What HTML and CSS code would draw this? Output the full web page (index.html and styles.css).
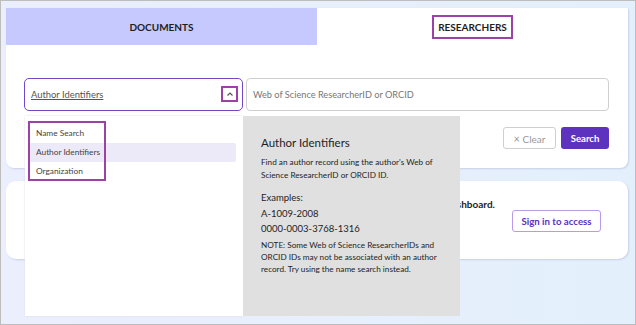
FILE: index.html
```html
<!DOCTYPE html>
<html lang="en">
<head>
    <meta charset="UTF-8">
    <meta name="viewport" content="width=device-width, initial-scale=1.0">
    <title>Researcher Search</title>
    <link rel="stylesheet" href="styles.css">
</head>
<body>
<div class="page">

    <!-- Search Card -->
    <div class="card">
        <div class="tabs">
            <div class="tab tab-docs">DOCUMENTS</div>
            <div class="tab tab-active"><span class="mark">RESEARCHERS</span></div>
        </div>
        <div class="search-body">
            <div class="search-row">
                <div class="select">
                    <span class="select-value">Author Identifiers</span>
                    <span class="chevron">
                        <svg width="8" height="6" viewBox="0 0 8 6"><path d="M1.5 4.5 L4 2 L6.5 4.5" fill="none" stroke="#555" stroke-width="1.2"/></svg>
                    </span>
                </div>
                <div class="input">Web of Science ResearcherID or ORCID</div>
            </div>
            <div class="actions">
                <button class="btn-clear"><span class="x">&times;</span> Clear</button>
                <button class="btn-search">Search</button>
            </div>
        </div>
    </div>

    <!-- Dashboard Card -->
    <div class="card-2">
        <p class="card-2-text">Sign in to view your dashboard.</p>
        <button class="btn-sign">Sign in to access</button>
    </div>

    <!-- Open dropdown -->
    <div class="dropdown">
        <div class="options">
            <div class="option-box">
                <div class="option">Name Search</div>
                <div class="option selected">Author Identifiers</div>
                <div class="option">Organization</div>
            </div>
        </div>
        <div class="info">
            <h3>Author Identifiers</h3>
            <p>Find an author record using the author's Web of Science ResearcherID or ORCID ID.</p>
            <p class="examples">Examples:<br>A-1009-2008<br>0000-0003-3768-1316</p>
            <p class="note">NOTE: Some Web of Science ResearcherIDs and ORCID IDs may not be associated with an author record. Try using the name search instead.</p>
        </div>
    </div>

</div>
</body>
</html>
```

FILE: styles.css
```css
body {
    margin: 0;
    font-family: "Source Sans Pro", Lato, sans-serif;
    color: #1e1e1e;
}
.page {
    position: relative;
    width: 636px;
    height: 325px;
    box-sizing: border-box;
    border: 1px solid #bdbdbd;
    padding: 7px 0 0 5px;
    background: linear-gradient(90deg, #ebeefd, #e3f0fc);
    overflow: hidden;
}
.card {
    width: 622px;
    background: white;
    border-radius: 0 0 8px 8px;
    box-shadow: 1px 1px 2px #c8d0e6;
}
.tabs {
    display: flex;
    height: 37px;
}
.tab {
    flex: 1;
    display: flex;
    justify-content: center;
    align-items: center;
    font-size: 10px;
    font-weight: bold;
    color: #1e1e1e;
}
.tab-docs {
    background: #c5c9fd;
}
.tab-active {
    background: white;
    border-radius: 0 4px 0 0;
}
.mark {
    border: 2.5px solid #9c42a7;
    padding: 4px 4px 4px;
    line-height: 12px;
}
.search-body {
    padding: 33px 19px 19px 18px;
}
.search-row {
    display: flex;
    gap: 3px;
}
.select {
    width: 219px;
    height: 33px;
    box-sizing: border-box;
    border: 1.5px solid #7447c9;
    border-radius: 5px;
    display: flex;
    align-items: center;
    justify-content: space-between;
    padding: 0 4px 1px 6px;
}
.select-value {
    font-size: 9.4px;
    color: #555;
    text-decoration: underline;
}
.chevron {
    width: 13px;
    height: 12px;
    border: 2.5px solid #9c42a7;
    display: flex;
    justify-content: center;
    align-items: center;
}
.input {
    flex: 1;
    height: 33px;
    box-sizing: border-box;
    border: 1px solid #cfcfcf;
    border-radius: 4px;
    display: flex;
    align-items: center;
    padding-left: 6px;
    font-size: 9.2px;
    color: #777;
}
.actions {
    display: flex;
    justify-content: flex-end;
    gap: 5px;
    margin-top: 16px;
}
button {
    font-family: inherit;
    font-size: 9.6px;
    height: 22px;
    border-radius: 3px;
    cursor: pointer;
    white-space: nowrap;
    padding: 0;
}
.btn-clear {
    width: 53px;
    background: white;
    border: 1px solid #cfcfcf;
    color: #999;
    font-size: 10px;
}
.x {
    font-size: 11px;
}
.btn-search {
    width: 48px;
    background: #5d32be;
    border: none;
    color: white;
    font-weight: bold;
}
.card-2 {
    width: 622px;
    height: 78px;
    margin-top: 13px;
    box-sizing: border-box;
    background: white;
    border-radius: 10px;
    box-shadow: 1px 1px 2px #c8d0e6;
    display: flex;
    justify-content: flex-end;
    align-items: flex-start;
    padding: 17px 27px 0 0;
}
.card-2-text {
    margin: 0 17px 0 0;
    font-size: 10px;
    line-height: 13px;
    font-weight: bold;
}
.btn-sign {
    margin-top: 12px;
    width: 89px;
    background: white;
    border: 1px solid #b79be8;
    color: #5d32be;
    font-weight: bold;
    font-size: 9.7px;
}
.dropdown {
    position: absolute;
    left: 24px;
    top: 115px;
    height: 200px;
    display: flex;
}
.options {
    width: 218px;
    background: white;
    padding: 5px 7px 0 3px;
    box-sizing: border-box;
    box-shadow: 0 0 2px #ddd;
}
.option-box {
    position: relative;
    padding: 3px 0;
}
.option-box::after {
    content: "";
    position: absolute;
    left: 0;
    top: 0;
    width: 74px;
    height: 56px;
    border: 2.5px solid #9c42a7;
}
.option {
    height: 19px;
    line-height: 19px;
    padding-left: 8px;
    font-size: 8.3px;
    color: #444;
    border-radius: 2px;
}
.selected {
    background: #ece9f8;
}
.info {
    width: 217px;
    background: #e0e0e0;
    padding: 18px 20px 0 18px;
    box-sizing: border-box;
}
.info h3 {
    margin: 0 0 4px;
    font-size: 11.5px;
    line-height: 18px;
    font-weight: normal;
}
.info p {
    margin: 0 0 8px;
    font-size: 8.2px;
    line-height: 13px;
}
.info .examples {
    font-size: 9.5px;
    line-height: 15.5px;
    margin-bottom: 2px;
}
.info .note {
    font-size: 8.2px;
    line-height: 12px;
}
```
